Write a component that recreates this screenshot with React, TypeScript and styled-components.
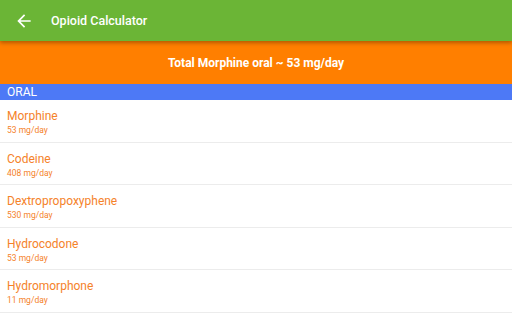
import styled, { createGlobalStyle } from "styled-components";

const GlobalStyle = createGlobalStyle`
  html, body {
    margin: 0;
    padding: 0;
    background: #ffffff;
    font-family: Roboto, "Noto Sans", sans-serif;
    overflow: hidden;
  }
`;

const Page = styled.div`
  width: 512px;
  height: 321px;
  display: flex;
  flex-direction: column;
  overflow: hidden;
`;

const Toolbar = styled.header`
  height: 41px;
  background: #6bb536;
  display: flex;
  align-items: center;
  padding-left: 14px;
  gap: 17px;
  color: #ffffff;
  position: relative;
  z-index: 2;
  box-shadow: 0 2px 4px rgba(0, 0, 0, 0.3);
`;

const BackButton = styled.button`
  width: 20px;
  height: 20px;
  padding: 0;
  border: none;
  background: none;
  display: flex;
  color: #ffffff;
`;

const Title = styled.h1`
  margin: 0;
  font-size: 12.5px;
  font-weight: 500;
`;

const TotalBanner = styled.div`
  height: 43px;
  background: #ff7f00;
  display: flex;
  align-items: center;
  justify-content: center;
  color: #ffffff;
  font-size: 12px;
  font-weight: 700;
`;

const SectionHeader = styled.div`
  height: 16px;
  background: #4d79f6;
  color: #ffffff;
  font-size: 12px;
  line-height: 16px;
  padding-left: 7px;
`;

const List = styled.ul`
  list-style: none;
  margin: 0;
  padding: 0;
`;

const Row = styled.li`
  height: 42.5px;
  box-sizing: border-box;
  border-bottom: 1px solid #ececec;
  padding: 9px 7px 0;
  display: flex;
  flex-direction: column;
  color: #f5822a;
`;

const DrugName = styled.span`
  font-size: 12px;
  line-height: 15px;
`;

const Dose = styled.span`
  font-size: 8.5px;
  line-height: 12px;
`;

const drugs = [
  { name: "Morphine", dose: "53 mg/day" },
  { name: "Codeine", dose: "408 mg/day" },
  { name: "Dextropropoxyphene", dose: "530 mg/day" },
  { name: "Hydrocodone", dose: "53 mg/day" },
  { name: "Hydromorphone", dose: "11 mg/day" },
];

export default function App() {
  return (
    <>
      <GlobalStyle />
      <Page>
        <Toolbar>
          <BackButton aria-label="Back">
            <svg width="20" height="20" viewBox="0 0 24 24" fill="currentColor">
              <path d="M20 11H7.83l5.59-5.59L12 4l-8 8 8 8 1.41-1.41L7.83 13H20v-2z" />
            </svg>
          </BackButton>
          <Title>Opioid Calculator</Title>
        </Toolbar>
        <TotalBanner>Total Morphine oral ~ 53 mg/day</TotalBanner>
        <SectionHeader>ORAL</SectionHeader>
        <List>
          {drugs.map((d) => (
            <Row key={d.name}>
              <DrugName>{d.name}</DrugName>
              <Dose>{d.dose}</Dose>
            </Row>
          ))}
        </List>
      </Page>
    </>
  );
}
